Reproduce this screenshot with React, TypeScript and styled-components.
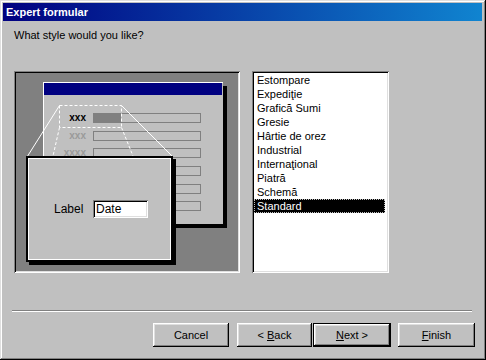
import React from "react";
import styled, { createGlobalStyle } from "styled-components";

const GlobalStyle = createGlobalStyle`
  body {
    margin: 0;
    font-family: "Liberation Sans", Arial, sans-serif;
  }
`;

const styles = [
  "Estompare",
  "Expediţie",
  "Grafică Sumi",
  "Gresie",
  "Hârtie de orez",
  "Industrial",
  "Internaţional",
  "Piatră",
  "Schemă",
  "Standard",
];

const rows = [
  { label: "xxx", strong: true },
  { label: "xxx", strong: false },
  { label: "xxxx", strong: false },
  { label: "", strong: false },
  { label: "", strong: false },
  { label: "", strong: false },
];

const App = () => {
  const selected = "Standard";

  return (
    <>
      <GlobalStyle />
      <Window>
        <TitleBar>Expert formular</TitleBar>
        <Body>
          <Prompt>What style would you like?</Prompt>
          <Main>
            <Preview>
              <MiniForm>
                <MiniTitle />
                <MiniRows>
                  {rows.map((r, i) => (
                    <React.Fragment key={i}>
                      <MiniLabel $strong={r.strong}>{r.label}</MiniLabel>
                      <MiniField>{r.strong && <MiniFill />}</MiniField>
                    </React.Fragment>
                  ))}
                </MiniRows>
              </MiniForm>
              <Lines width="226" height="202" viewBox="0 0 226 202">
                <rect x="45.5" y="34.5" width="62" height="22" fill="none" stroke="#fff" strokeDasharray="3 2" />
                <line x1="45.5" y1="34.5" x2="13" y2="86" stroke="#fff" />
                <line x1="45.5" y1="56.5" x2="39" y2="85" stroke="#fff" strokeDasharray="3 2" />
                <line x1="107.5" y1="34.5" x2="159" y2="86" stroke="#fff" />
                <line x1="107.5" y1="56.5" x2="119" y2="85" stroke="#fff" strokeDasharray="3 2" />
              </Lines>
              <ZoomBox>
                <ZoomLabel>Label</ZoomLabel>
                <ZoomInput>Date</ZoomInput>
              </ZoomBox>
            </Preview>
            <ListBox>
              {styles.map((s) => (
                <ListItem key={s} $selected={s === selected}>
                  {s}
                </ListItem>
              ))}
            </ListBox>
          </Main>
          <Separator />
          <ButtonRow>
            <Button $width={76} $gap={8}>Cancel</Button>
            <Button $width={75} $gap={1}>
              &lt; <u>B</u>ack
            </Button>
            <Button $width={78} $gap={7} $default>
              <u>N</u>ext &gt;
            </Button>
            <Button $width={77} $gap={0}>
              <u>F</u>inish
            </Button>
          </ButtonRow>
        </Body>
      </Window>
    </>
  );
};

const Window = styled.div`
  width: 486px;
  height: 360px;
  box-sizing: border-box;
  padding: 3px;
  background: #c0c0c0;
  box-shadow: inset -1px -1px 0 #000, inset 1px 1px 0 #dfdfdf,
    inset -2px -2px 0 #808080, inset 2px 2px 0 #fff;
  display: flex;
  flex-direction: column;
  font-size: 11px;
  color: #000;
`;

const TitleBar = styled.div`
  height: 18px;
  display: flex;
  align-items: center;
  padding-left: 3px;
  background: linear-gradient(90deg, #000080 0%, #1084d0 100%);
  color: #fff;
  font-weight: bold;
  font-size: 11px;
  margin-right: 1px;
`;

const Body = styled.div`
  display: flex;
  flex-direction: column;
  padding-top: 8px;
`;

const Prompt = styled.div`
  margin-left: 11px;
  height: 13px;
  line-height: 13px;
`;

const Main = styled.div`
  display: flex;
  gap: 12px;
  margin: 29px 0 0 11px;
`;

const Preview = styled.div`
  position: relative;
  width: 226px;
  height: 202px;
  box-sizing: border-box;
  padding: 11px 0 0 29px;
  background: #808080;
  box-shadow: inset 1px 1px 0 #808080, inset -1px -1px 0 #fff,
    inset 2px 2px 0 #000, inset -2px -2px 0 #dfdfdf;
`;

const MiniForm = styled.div`
  width: 180px;
  height: 142px;
  box-sizing: border-box;
  border-top: 1px solid #fff;
  border-left: 1px solid #fff;
  background: #c0c0c0;
  box-shadow: 4px 4px 0 #000;
`;

const MiniTitle = styled.div`
  height: 12px;
  margin-right: 1px;
  background: #000080;
`;

const MiniRows = styled.div`
  display: grid;
  grid-template-columns: 42px 108px;
  grid-auto-rows: 17.7px;
  column-gap: 7px;
  padding-top: 18px;
`;

const MiniLabel = styled.div<{ $strong: boolean }>`
  height: 10px;
  line-height: 10px;
  text-align: right;
  font-size: 10px;
  font-weight: bold;
  color: ${(p) => (p.$strong ? "#000" : "#9a9a9a")};
`;

const MiniField = styled.div`
  height: 10px;
  box-sizing: border-box;
  border: 1px solid #808080;
  display: flex;
`;

const MiniFill = styled.div`
  width: 28px;
  margin: -1px 0 -1px -1px;
  background: #808080;
`;

const Lines = styled.svg`
  position: absolute;
  left: 0;
  top: 0;
`;

const ZoomBox = styled.div`
  position: absolute;
  left: 14px;
  top: 87px;
  width: 143px;
  height: 102px;
  box-sizing: border-box;
  border: 1px solid #fff;
  background: #c0c0c0;
  box-shadow: 0 0 0 2px #000, 3px 3px 0 2px #000;
  display: flex;
  align-items: center;
  padding-left: 25px;
  font-size: 12px;
`;

const ZoomLabel = styled.span`
  width: 39px;
  line-height: 18px;
`;

const ZoomInput = styled.div`
  width: 55px;
  height: 18px;
  box-sizing: border-box;
  padding: 2px 0 0 3px;
  background: #fff;
  line-height: 14px;
  box-shadow: inset 1px 1px 0 #808080, inset -1px -1px 0 #fff,
    inset 2px 2px 0 #000, inset -2px -2px 0 #dfdfdf;
`;

const ListBox = styled.div`
  width: 137px;
  height: 202px;
  box-sizing: border-box;
  padding: 2px 4px 2px 2px;
  background: #fff;
  box-shadow: inset 1px 1px 0 #808080, inset -1px -1px 0 #fff,
    inset 2px 2px 0 #000, inset -2px -2px 0 #dfdfdf;
`;

const ListItem = styled.div<{ $selected: boolean }>`
  height: 14px;
  line-height: 14px;
  padding-left: 3px;
  white-space: nowrap;
  background: ${(p) => (p.$selected ? "#000" : "transparent")};
  color: ${(p) => (p.$selected ? "#fff" : "#000")};
  outline: ${(p) => (p.$selected ? "1px dotted #c0c0c0" : "none")};
  outline-offset: -1px;
`;

const Separator = styled.div`
  width: 460px;
  height: 2px;
  box-sizing: border-box;
  margin: 37px 0 0 9px;
  border-top: 1px solid #808080;
  border-bottom: 1px solid #fff;
`;

const ButtonRow = styled.div`
  display: flex;
  justify-content: flex-end;
  margin-top: 11px;
  padding-right: 8px;
`;

const Button = styled.button<{ $width: number; $gap: number; $default?: boolean }>`
  width: ${(p) => p.$width}px;
  height: 24px;
  margin: 0 ${(p) => p.$gap}px 0 0;
  padding: 0;
  box-sizing: border-box;
  font-family: "Liberation Sans", Arial, sans-serif;
  font-size: 11px;
  color: #000;
  background: #c0c0c0;
  border: ${(p) => (p.$default ? "1px solid #000" : "none")};
  box-shadow: inset -1px -1px 0 #000, inset 1px 1px 0 #fff,
    inset -2px -2px 0 #808080, inset 2px 2px 0 #dfdfdf;
  cursor: pointer;

  u {
    text-decoration: underline;
  }
`;

export default App;
